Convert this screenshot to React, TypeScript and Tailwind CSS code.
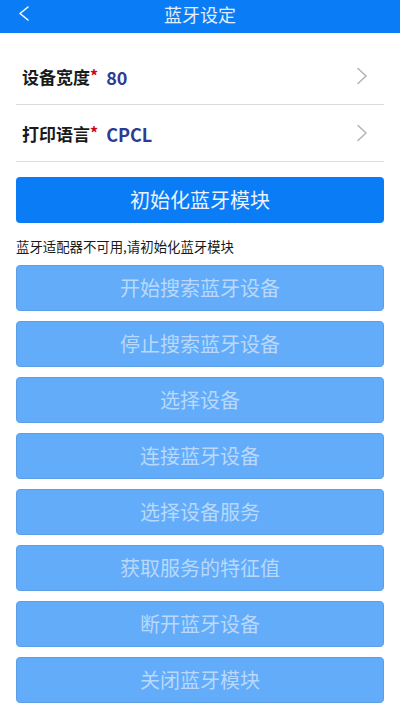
import React from "react";

const buttons = [
  "开始搜索蓝牙设备",
  "停止搜索蓝牙设备",
  "选择设备",
  "连接蓝牙设备",
  "选择设备服务",
  "获取服务的特征值",
  "断开蓝牙设备",
  "关闭蓝牙模块",
];

function Chevron() {
  return (
    <svg width="12" height="18" viewBox="0 0 12 18" fill="none">
      <path d="M2 1.5 L10 9 L2 16.5" stroke="#b5b5b5" strokeWidth="1.6" strokeLinecap="round" strokeLinejoin="round" />
    </svg>
  );
}

function Row({ label, value }: { label: string; value: string }) {
  return (
    <div className="flex h-[57px] items-center justify-between border-b border-[#dcdcdc] pl-[6px] pr-[16px]">
      <div className="flex items-center pt-[2px]">
        <span className="text-[17px] font-bold text-[#1a1a1a]">{label}</span>
        <span className="mb-[4px] text-[16px] font-bold text-[#d0021b]">*</span>
        <span className="ml-[8px] text-[18px] font-bold text-[#2e3a93]">{value}</span>
      </div>
      <Chevron />
    </div>
  );
}

export default function App() {
  return (
    <div
      className="flex h-[710px] w-[400px] flex-col bg-white"
      style={{ fontFamily: '"Noto Sans CJK SC", "Noto Sans", sans-serif' }}
    >
      <div className="relative flex h-[33px] items-center justify-center bg-[#0a7cf6] pb-[5px]">
        <svg className="absolute left-[18px] top-[6px]" width="12" height="15" viewBox="0 0 12 15" fill="none">
          <path d="M10 1 L2 7.5 L10 14" stroke="#ffffff" strokeWidth="1.5" strokeLinecap="round" strokeLinejoin="round" />
        </svg>
        <span className="text-[18px] leading-none text-[#e3efff]">蓝牙设定</span>
      </div>
      <div className="px-[16px] pt-[15px]">
        <Row label="设备宽度" value="80" />
        <Row label="打印语言" value="CPCL" />
        <div className="mt-[15px] flex h-[46px] items-center justify-center rounded-[4px] bg-[#0a7cf6] text-[20px] text-[#eaf3ff]">
          初始化蓝牙模块
        </div>
        <div className="mt-[14px] text-[13.4px] leading-[18px] text-[#1a1a1a]">蓝牙适配器不可用,请初始化蓝牙模块</div>
        <div className="mt-[10px] flex flex-col gap-[10px]">
          {buttons.map((b) => (
            <div
              key={b}
              className="flex h-[46px] items-center justify-center rounded-[4px] border border-[#5a9ee8] bg-[#62acfa] text-[20px] text-[#b8d9fc]"
            >
              {b}
            </div>
          ))}
        </div>
      </div>
    </div>
  );
}
